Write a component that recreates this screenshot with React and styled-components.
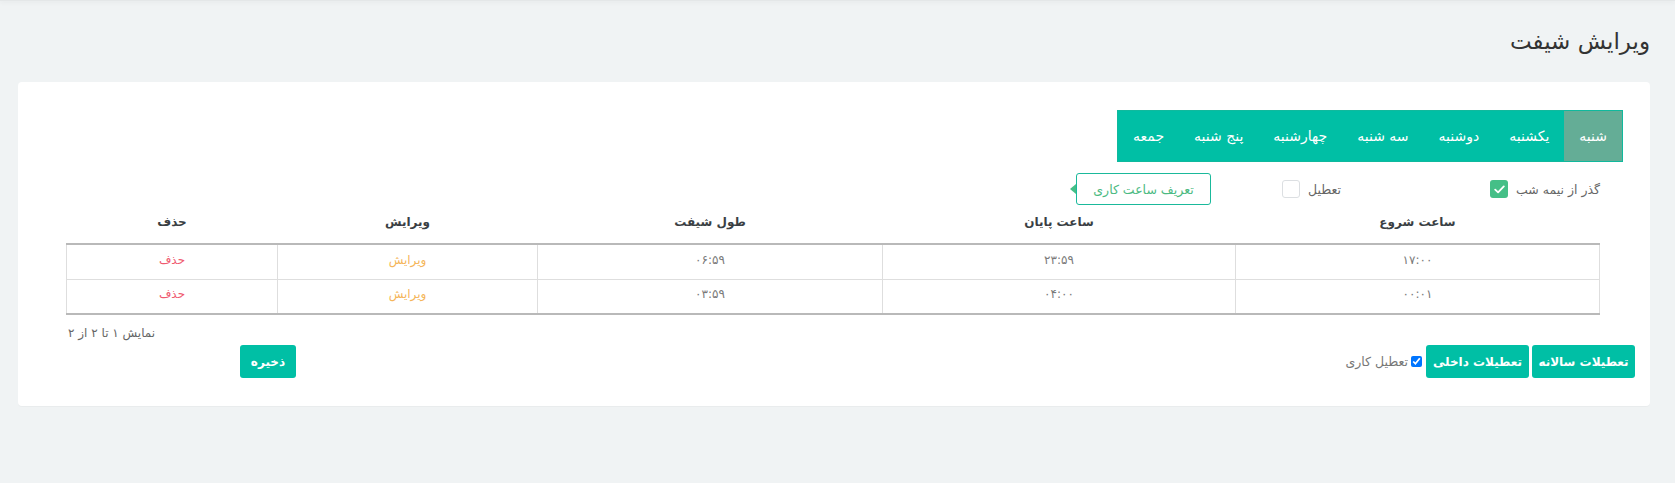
import React from "react";
import styled, { createGlobalStyle } from "styled-components";

const GlobalStyle = createGlobalStyle`
  html, body {
    margin: 0;
    padding: 0;
    background: #f0f3f4;
    font-family: "DejaVu Sans", "Noto Sans", sans-serif;
  }
  * { box-sizing: border-box; }
`;

const days = ["شنبه", "یکشنبه", "دوشنبه", "سه شنبه", "چهارشنبه", "پنج شنبه", "جمعه"];

const rows = [
  { start: "۱۷:۰۰", end: "۲۳:۵۹", length: "۰۶:۵۹" },
  { start: "۰۰:۰۱", end: "۰۴:۰۰", length: "۰۳:۵۹" },
];

const App = () => {
  return (
    <>
      <GlobalStyle />
      <TopShade />
      <Page dir="rtl">
        <Title>ویرایش شیفت</Title>
        <Card>
          <TabBar>
            {days.map((d, i) => (
              <Tab key={d} $active={i === 0}>
                {d}
              </Tab>
            ))}
          </TabBar>

          <FilterRow>
            <CheckLabel $width="259px">
              گذر از نیمه شب
              <GreenBox>
                <svg width="11" height="9" viewBox="0 0 11 9">
                  <path d="M1.2 4.6 L4.1 7.4 L9.8 1.4" fill="none" stroke="#fff" strokeWidth="1.8" strokeLinecap="round" strokeLinejoin="round" />
                </svg>
              </GreenBox>
            </CheckLabel>
            <CheckLabel $width="130px">
              تعطیل
              <EmptyBox />
            </CheckLabel>
            <DefineButton>تعریف ساعت کاری</DefineButton>
          </FilterRow>

          <Table>
            <colgroup>
              <col style={{ width: "364px" }} />
              <col style={{ width: "353px" }} />
              <col style={{ width: "345px" }} />
              <col style={{ width: "260px" }} />
              <col style={{ width: "211px" }} />
            </colgroup>
            <thead>
              <tr>
                <Th>ساعت شروع</Th>
                <Th>ساعت پایان</Th>
                <Th>طول شیفت</Th>
                <Th>ویرایش</Th>
                <Th>حذف</Th>
              </tr>
            </thead>
            <tbody>
              {rows.map((r) => (
                <tr key={r.start}>
                  <Td>{r.start}</Td>
                  <Td>{r.end}</Td>
                  <Td>{r.length}</Td>
                  <Td $color="#f5b65a">ویرایش</Td>
                  <Td $color="#ef5a6f">حذف</Td>
                </tr>
              ))}
            </tbody>
          </Table>

          <Pager>نمایش ۱ تا ۲ از ۲</Pager>

          <Footer>
            <ButtonGroup>
              <TealButton>تعطیلات سالانه</TealButton>
              <TealButton>تعطیلات داخلی</TealButton>
            </ButtonGroup>
            <SmallCheck>
              <input type="checkbox" defaultChecked />
              تعطیل کاری
            </SmallCheck>
            <SaveButton>ذخیره</SaveButton>
          </Footer>
        </Card>
      </Page>
    </>
  );
};

export default App;

const TopShade = styled.div`
  height: 1px;
  background: #e4e7e8;
  box-shadow: 0 1px 4px rgba(0, 0, 0, 0.12);
`;

const Page = styled.div`
  padding: 0 25px 0 18px;
  height: 482px;
`;

const Title = styled.h1`
  margin: 0;
  padding-top: 22px;
  height: 81px;
  font-size: 23px;
  line-height: 36px;
  font-weight: 400;
  color: #333;
`;

const Card = styled.div`
  background: #fff;
  border-radius: 4px;
  padding: 28px 15px 28px 15px;
  box-shadow: 0 1px 1px rgba(0, 0, 0, 0.03);
`;

const TabBar = styled.div`
  display: flex;
  width: fit-content;
  height: 52px;
  margin-right: 12px;
  background: #00bfa5;
  border: 1px solid #10b99d;
`;

const Tab = styled.div`
  display: flex;
  align-items: center;
  padding: 0 15px;
  color: #fff;
  font-size: 14px;
  font-weight: 400;
  background: ${(p) => (p.$active ? "#64ad96" : "transparent")};
`;

const FilterRow = styled.div`
  display: flex;
  align-items: center;
  height: 32px;
  margin: 11px 35px 0 0;
`;

const CheckLabel = styled.label`
  display: flex;
  align-items: center;
  gap: 8px;
  width: ${(p) => p.$width};
  font-size: 12.5px;
  color: #666;
`;

const GreenBox = styled.span`
  display: inline-flex;
  align-items: center;
  justify-content: center;
  width: 18px;
  height: 18px;
  border-radius: 3px;
  background: #45bf87;
`;

const EmptyBox = styled.span`
  display: inline-block;
  width: 18px;
  height: 18px;
  border-radius: 3px;
  border: 1px solid #dcdfe2;
  background: #fff;
`;

const DefineButton = styled.button`
  position: relative;
  width: 135px;
  height: 32px;
  padding: 0;
  border: 1px solid #1ab99b;
  border-radius: 3px;
  background: #fff;
  color: #4cba82;
  font-family: inherit;
  font-size: 12.5px;

  &::before {
    content: "";
    position: absolute;
    left: -7px;
    top: 50%;
    margin-top: -5px;
    border-top: 5px solid transparent;
    border-bottom: 5px solid transparent;
    border-right: 6px solid #45bf87;
  }
`;

const Table = styled.table`
  width: 1532px;
  margin: 0 35px 0 0;
  border-collapse: collapse;
  table-layout: fixed;
`;

const Th = styled.th`
  height: 39px;
  padding: 0 0 4px;
  font-size: 12px;
  font-weight: 700;
  color: #3a3f44;
  text-align: center;
  vertical-align: middle;
  border-bottom: 2px solid #b9b9b9;
`;

const Td = styled.td`
  height: 35px;
  padding: 0 0 4px;
  text-align: center;
  vertical-align: middle;
  font-size: 12px;
  color: ${(p) => p.$color || "#7a7a7a"};
  border: 1px solid #dedede;

  tr:last-child > & {
    border-bottom: 2px solid #b9b9b9;
  }
`;

const Pager = styled.div`
  margin-left: 35px;
  padding-top: 8px;
  height: 30px;
  line-height: 20px;
  font-size: 12px;
  color: #666;
  text-align: left;
`;

const Footer = styled.div`
  display: flex;
  align-items: center;
  height: 33px;
`;

const ButtonGroup = styled.div`
  display: flex;
  gap: 3px;
`;

const TealButton = styled.button`
  width: ${(p) => p.$width || "103px"};
  height: 33px;
  padding: 0;
  border: none;
  border-radius: 3px;
  background: #00bfa5;
  color: #fff;
  font-family: inherit;
  font-size: 12px;
  font-weight: 700;
  white-space: nowrap;
`;

const SmallCheck = styled.label`
  display: flex;
  align-items: center;
  gap: 3px;
  margin-right: 4px;
  font-size: 12.5px;
  color: #777;

  input {
    margin: 0;
    width: 11px;
    height: 11px;
  }
`;

const SaveButton = styled(TealButton).attrs({ $width: "56px" })`
  margin-right: auto;
  margin-left: 207px;
`;
